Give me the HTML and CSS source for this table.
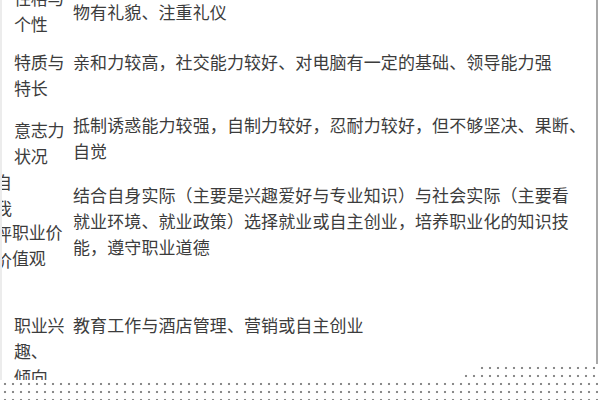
FILE: index.html
```html
<!DOCTYPE html>
<html lang="zh">
<head>
<meta charset="utf-8">
<link rel="stylesheet" href="styles.css">
</head>
<body>
<div class="page">
  <div class="table">
    <div class="row r1">
      <div class="label">性格与<br>个性</div>
      <div class="content c1">物有礼貌、注重礼仪</div>
    </div>
    <div class="row r2">
      <div class="label">特质与<br>特长</div>
      <div class="content">亲和力较高，社交能力较好、对电脑有一定的基础、领导能力强</div>
    </div>
    <div class="row r3">
      <div class="label l3">意志力<br>状况</div>
      <div class="content">抵制诱惑能力较强，自制力较好，忍耐力较好，但不够坚决、果断、<br>自觉</div>
    </div>
    <div class="row r4">
      <div class="side"><span class="side-text">自<br>我<br>评<br>价</span></div>
      <div class="label l4">职业价<br>值观</div>
      <div class="content c4">结合自身实际（主要是兴趣爱好与专业知识）与社会实际（主要看<br>就业环境、就业政策）选择就业或自主创业，培养职业化的知识技<br>能，遵守职业道德</div>
    </div>
    <div class="row r5">
      <div class="label">职业兴<br>趣、<br>倾向</div>
      <div class="content">教育工作与酒店管理、营销或自主创业</div>
    </div>
  </div>
  <div class="dots">
    <div class="dot-row d1"></div>
    <div class="dot-row d2"></div>
    <div class="dot-row d3"></div>
  </div>
</div>
</body>
</html>
```
FILE: styles.css
```css
html, body {
  margin: 0;
  padding: 0;
  background: #fff;
  overflow: hidden;
}
.page {
  position: relative;
  width: 594px;
  height: 400px;
  border-left: 2px solid #ececec;
  border-right: 2px solid #a8a8a8;
  font-family: "Noto Sans CJK SC", sans-serif;
  font-size: 17px;
  line-height: 26px;
  color: #3c3c3c;
}
.table {
  display: flex;
  flex-direction: column;
}
.row {
  display: flex;
  align-items: flex-start;
  white-space: nowrap;
}
.label {
  width: 59px;
  padding-left: 12px;
  letter-spacing: -0.3px;
}
.content {
  letter-spacing: 0.1px;
}
.r1 { margin-top: -15px; }
.c1 { margin-top: 14px; }
.r2 { margin-top: 12px; }
.r3 { margin-top: 11px; }
.l3 { margin-top: 5px; }
.r4 { margin-top: 0; }
.side {
  width: 10px;
  overflow: hidden;
}
.side-text {
  display: block;
  margin-left: -7px;
}
.l4 {
  width: 61px;
  padding-left: 0;
  margin-top: 50px;
}
.c4 { margin-top: 13px; }
.r5 { margin-top: 39px; }
.dots {
  position: absolute;
  left: -2px;
  right: -2px;
  bottom: 0;
  height: 36px;
  display: flex;
  flex-direction: column;
  align-items: flex-end;
}
.dot-row {
  background-color: #fff;
  background-image: radial-gradient(circle at 50% 50%, #8a8a8a 0.9px, rgba(255,255,255,0) 1.6px);
  background-size: 8px 8px;
  background-position: 1px 0;
}
.d1 { width: 121px; height: 8px; }
.d2 { width: 137px; height: 8px; }
.d3 { width: 100%; height: 20px; }
```
